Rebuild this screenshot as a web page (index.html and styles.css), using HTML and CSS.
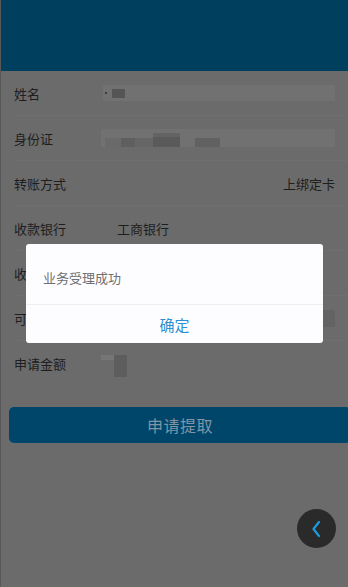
FILE: index.html
```html
<!DOCTYPE html>
<html lang="zh-CN">
<head>
<meta charset="utf-8">
<title>申请提取</title>
<link rel="stylesheet" href="styles.css">
</head>
<body>
<div class="page">
  <header class="topbar"></header>
  <div class="form">
    <div class="row">
      <span class="label">姓名</span>
      <div class="blur blur-name"><span class="dot"></span><span class="blk bn1"></span></div>
    </div>
    <div class="row">
      <span class="label">身份证</span>
      <div class="blur blur-id">
        <span class="blk bi1"></span><span class="blk bi2"></span><span class="blk bi4"></span>
      </div>
    </div>
    <div class="row">
      <span class="label">转账方式</span>
      <span class="value-right">上绑定卡</span>
    </div>
    <div class="row">
      <span class="label">收款银行</span>
      <span class="value bank">工商银行</span>
    </div>
    <div class="row">
      <span class="label">收</span>
    </div>
    <div class="row">
      <span class="label">可</span>
      <div class="blur-right"></div>
    </div>
    <div class="row last">
      <span class="label">申请金额</span>
      <div class="amount"><span class="am1"></span><span class="am2"></span></div>
    </div>
  </div>
  <div class="actions">
    <button class="submit">申请提取</button>
  </div>
  <button class="back" aria-label="返回">
    <svg width="10" height="18" viewBox="0 0 10 18"><path d="M8 2 L2.5 9 L8 16" fill="none" stroke="#1d9be0" stroke-width="2.2" stroke-linecap="round" stroke-linejoin="round"/></svg>
  </button>
  <div class="dialog">
    <div class="dialog-msg">业务受理成功</div>
    <div class="dialog-btn">确定</div>
  </div>
</div>
</body>
</html>
```
FILE: styles.css
```css
* { box-sizing: border-box; }
html, body { margin: 0; padding: 0; }
body {
  width: 348px;
  height: 587px;
  overflow: hidden;
  background: #6b6b6b;
  font-family: "Noto Sans CJK SC", "Noto Sans", sans-serif;
}
.page {
  position: relative;
  width: 348px;
  height: 587px;
  background: #6b6b6b;
  border-left: 1px solid #585858;
}
.topbar {
  height: 71px;
  background: #003f5e;
}
.form {
  display: flex;
  flex-direction: column;
}
.row {
  height: 45px;
  margin-left: 13px;
  padding-right: 13px;
  display: flex;
  align-items: center;
  border-bottom: 1px solid #6f6f6f;
  position: relative;
}
.row.last { border-bottom: none; }
.label {
  width: 88px;
  font-size: 13px;
  color: #1e1e1e;
  flex-shrink: 0;
}
.value { font-size: 13px; color: #1e1e1e; }
.bank { margin-left: 15px; }
.value-right { margin-left: auto; font-size: 13px; color: #1e1e1e; }
.blur {
  flex: 1;
  display: flex;
  align-items: flex-end;
  background: #717171;
}
.blur-name {
  height: 16px;
  margin-left: 1px;
  align-items: center;
  gap: 5px;
  padding-left: 2px;
}
.dot { width: 2px; height: 2px; background: #3e3e3e; }
.bn1 { width: 13px; height: 9px; background: #555555; }
.blur-id {
  height: 18px;
  margin-left: -1px;
  padding-left: 4px;
}
.blk { display: block; }
.bi1 { width: 48px; height: 9px; background: #666666; border-left: 8px solid #6a6a6a; }
.bi1 { box-shadow: inset 8px 0 0 #6a6a6a, inset 22px 0 0 #5f5f5f; }
.bi2 { width: 27px; height: 14px; background: #5a5a5a; margin-right: 15px; border-top: 4px solid #646464; }
.bi4 { width: 25px; height: 9px; background: #616161; }
.blur-right {
  margin-left: auto;
  width: 14px;
  height: 17px;
  background: #636363;
}
.amount {
  display: flex;
  margin-left: -1px;
  height: 22px;
  align-self: center;
  margin-top: 4px;
}
.am1 { width: 13px; height: 5px; background: #767676; }
.am2 { width: 13px; height: 22px; background: #5d5d5d; }
.actions {
  padding: 21px 0 0 8px;
  margin-right: -3px;
}
.submit {
  display: block;
  width: 100%;
  height: 36px;
  border: none;
  border-radius: 5px;
  background: #00466a;
  color: #7f95a6;
  font-family: inherit;
  font-size: 16px;
  padding: 0;
  letter-spacing: 0.5px;
}
.back {
  position: absolute;
  left: 296px;
  top: 509px;
  width: 39px;
  height: 39px;
  border-radius: 50%;
  border: none;
  background: #2a2a2a;
  display: flex;
  align-items: center;
  justify-content: center;
  padding: 0 2px 0 0;
}
.dialog {
  position: absolute;
  left: 25px;
  top: 244px;
  width: 297px;
  height: 99px;
  background: #fdfdff;
  border-radius: 3px;
  display: flex;
  flex-direction: column;
}
.dialog-msg {
  height: 61px;
  padding-left: 17px;
  display: flex;
  align-items: center;
  font-size: 13px;
  color: #6f6f6f;
  border-bottom: 1px solid #eeeef2;
  padding-top: 6px;
}
.dialog-btn {
  flex: 1;
  display: flex;
  align-items: center;
  justify-content: center;
  font-size: 15px;
  color: #2a90cf;
}
```
